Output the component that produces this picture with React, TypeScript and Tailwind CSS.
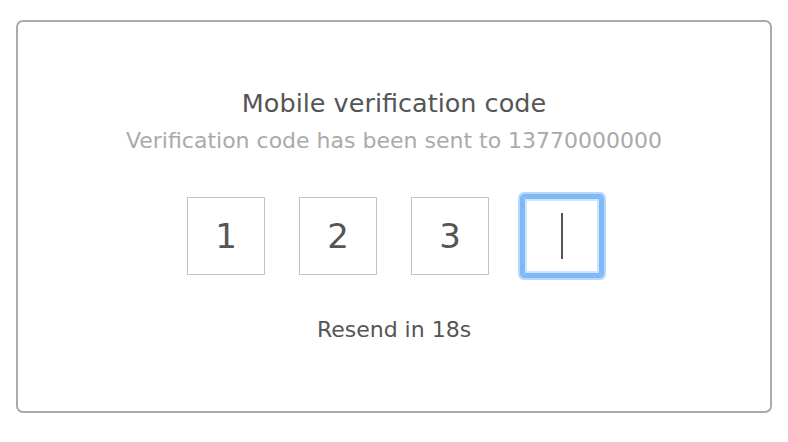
const digits = ['1', '2', '3', ''];

export default function App() {
  return (
    <div className="w-[788px] h-[442px] bg-white px-[16px] pt-[20px] font-['DejaVu_Sans',Verdana,sans-serif]">
      <div className="h-[393px] border-2 border-[#aaaaaa] rounded-[7px] flex flex-col items-center pt-[65px]">
        <div className="text-[25.5px] leading-[32px] text-[#555555]">Mobile verification code</div>
        <div className="text-[22px] leading-[28px] text-[#aaaaaa] mt-[8px]">Verification code has been sent to 13770000000</div>
        <div className="flex gap-[34px] mt-[42px]">
          {digits.map((d, i) => {
            const active = i === digits.length - 1;
            return (
              <div
                key={i}
                className={
                  active
                    ? 'w-[78px] h-[78px] flex items-center justify-center border-2 border-[#7fb9f7] rounded-[2px] shadow-[0_0_0_3px_#7db8f7,0_0_0_5px_#b7d7fb,inset_0_0_0_2px_#cfe5fd]'
                    : 'w-[78px] h-[78px] flex items-center justify-center border border-[#c4c4c4] text-[34px] text-[#555555]'
                }
              >
                {active ? <div className="w-[2px] h-[46px] bg-[#555555]" /> : d}
              </div>
            );
          })}
        </div>
        <div className="text-[22px] leading-[28px] text-[#555555] mt-[41px]">Resend in 18s</div>
      </div>
    </div>
  );
}
